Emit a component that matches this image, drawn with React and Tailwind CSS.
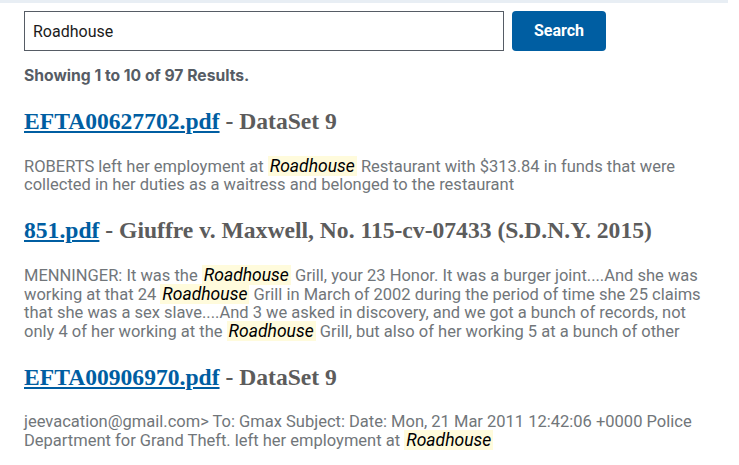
import React from "react"

const results = [
  {
    file: "EFTA00627702.pdf",
    source: "DataSet 9",
    parts: [
      "ROBERTS left her employment at ",
      { hl: "Roadhouse" },
      " Restaurant with $313.84 in funds that were collected in her duties as a waitress and belonged to the restaurant",
    ],
  },
  {
    file: "851.pdf",
    source: "Giuffre v. Maxwell, No. 115-cv-07433 (S.D.N.Y. 2015)",
    parts: [
      "MENNINGER: It was the ",
      { hl: "Roadhouse" },
      " Grill, your 23 Honor. It was a burger joint....And she was working at that 24 ",
      { hl: "Roadhouse" },
      " Grill in March of 2002 during the period of time she 25 claims that she was a sex slave....And 3 we asked in discovery, and we got a bunch of records, not only 4 of her working at the ",
      { hl: "Roadhouse" },
      " Grill, but also of her working 5 at a bunch of other",
    ],
  },
  {
    file: "EFTA00906970.pdf",
    source: "DataSet 9",
    parts: [
      "jeevacation@gmail.com> To: Gmax Subject: Date: Mon, 21 Mar 2011 12:42:06 +0000 Police Department for Grand Theft. left her employment at ",
      { hl: "Roadhouse" },
    ],
  },
]

function Result({ item }) {
  return (
    <div>
      <h2 className="font-['Liberation_Serif',serif] font-bold text-[23.6px] leading-[28px] text-[#5c5c5c] w-[704px]">
        <a href="#" className="text-[#005ea2] underline underline-offset-[2px]">
          {item.file}
        </a>{" "}
        - {item.source}
      </h2>
      <p className="mt-[22px] w-[682px] font-['Roboto',sans-serif] text-[16.5px] leading-[18px] text-[#71767a]">
        {item.parts.map((p, i) =>
          typeof p === "string" ? (
            <span key={i}>{p}</span>
          ) : (
            <mark key={i} className="bg-[#fffbdc] text-black italic text-[17.5px] px-[2px]">
              {p.hl}
            </mark>
          )
        )}
      </p>
    </div>
  )
}

export default function App() {
  return (
    <div className="w-[739px] h-[465px] overflow-hidden bg-white font-['Inter',sans-serif]">
      <div className="h-[3px] w-[728px] bg-[#e8eef4]" />
      <div className="w-[704px] ml-[24px]">
        <form className="flex gap-[8px] mt-[8px]" onSubmit={(e) => e.preventDefault()}>
          <input
            defaultValue="Roadhouse"
            className="w-[480px] h-[40px] border border-[#565c65] px-[8px] text-[16px] text-[#1b1b1b] font-['Roboto',sans-serif] outline-none"
          />
          <button className="w-[94px] h-[40px] rounded-[4px] bg-[#005ea2] text-white font-bold text-[16px] font-['Roboto',sans-serif]">
            Search
          </button>
        </form>
        <p className="mt-[13px] text-[15.7px] font-bold text-[#565c65]">Showing 1 to 10 of 97 Results.</p>
        <div className="mt-[19px] flex flex-col gap-[22px]">
          {results.map((r) => (
            <Result key={r.file} item={r} />
          ))}
        </div>
      </div>
    </div>
  )
}
